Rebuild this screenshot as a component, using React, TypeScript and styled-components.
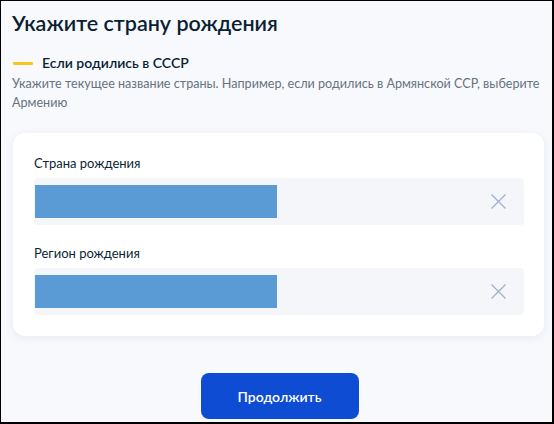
import React from "react";
import styled, { createGlobalStyle } from "styled-components";

const Global = createGlobalStyle`
  html, body { margin: 0; padding: 0; }
  body { font-family: Lato, "Noto Sans", sans-serif; }
  * { box-sizing: border-box; }
`;

const Page = styled.div`
  width: 554px;
  height: 424px;
  border-style: solid;
  border-color: #000;
  border-width: 1px 2px 2px 1px;
  background: #f8f9fd;
  padding: 8px 9px 0 11px;
  display: flex;
  flex-direction: column;
  color: #0b1f33;
`;

const Title = styled.h1`
  margin: 0;
  font-size: 21.5px;
  line-height: 28px;
  font-weight: 600;
  color: #0b1f33;
`;

const Hint = styled.div`
  margin-top: 17px;
  display: flex;
  align-items: center;
  gap: 9px;
  font-size: 14px;
  line-height: 18px;
  font-weight: 600;
`;

const HintBar = styled.span`
  width: 20px;
  height: 3px;
  background: #fcc41a;
  border-radius: 1px;
  margin-left: 1px;
`;

const Desc = styled.p`
  margin: 2px 0 0;
  font-size: 12.6px;
  line-height: 19px;
  color: #66727f;
`;

const Card = styled.div`
  margin-top: 21px;
  margin-left: 1px;
  width: 531px;
  background: #fff;
  border-radius: 12px;
  box-shadow: 0 2px 8px rgba(150, 165, 210, 0.18);
  padding: 22px 20px 21px 21px;
  display: flex;
  flex-direction: column;
  gap: 20px;
`;

const Field = styled.div`
  display: flex;
  flex-direction: column;
  gap: 6px;
`;

const Label = styled.label`
  font-size: 13px;
  line-height: 17px;
  color: #0b1f33;
`;

const Input = styled.div`
  height: 47px;
  background: #f5f6fa;
  border-radius: 4px;
  display: flex;
  align-items: center;
  padding: 0 18px 0 1px;
`;

const Filled = styled.div`
  width: 242px;
  height: 33px;
  background: #5b9bd5;
`;

const Clear = styled.button`
  margin-left: auto;
  width: 15px;
  height: 15px;
  padding: 0;
  border: 0;
  background: none;
  display: flex;
  cursor: pointer;
`;

const Footer = styled.div`
  display: flex;
  justify-content: center;
  margin-top: 37px;
  padding-left: 4px;
`;

const Button = styled.button`
  width: 158px;
  height: 46px;
  border: 0;
  border-radius: 8px;
  background: #0d4cd3;
  color: #fff;
  font-family: Lato, "Noto Sans", sans-serif;
  font-size: 14px;
  font-weight: 600;
`;

const CloseIcon = () => (
  <svg width="15" height="15" viewBox="0 0 15 15">
    <path d="M0.5 0.5 L14.5 14.5 M14.5 0.5 L0.5 14.5" stroke="#a3aece" strokeWidth="1.3" fill="none" />
  </svg>
);

const fields = ["Страна рождения", "Регион рождения"];

export default function App() {
  return (
    <>
      <Global />
      <Page>
        <Title>Укажите страну рождения</Title>
        <Hint>
          <HintBar />
          Если родились в СССР
        </Hint>
        <Desc>
          Укажите текущее название страны. Например, если родились в Армянской ССР, выберите Армению
        </Desc>
        <Card>
          {fields.map((f) => (
            <Field key={f}>
              <Label>{f}</Label>
              <Input>
                <Filled />
                <Clear aria-label="Очистить">
                  <CloseIcon />
                </Clear>
              </Input>
            </Field>
          ))}
        </Card>
        <Footer>
          <Button>Продолжить</Button>
        </Footer>
      </Page>
    </>
  );
}
